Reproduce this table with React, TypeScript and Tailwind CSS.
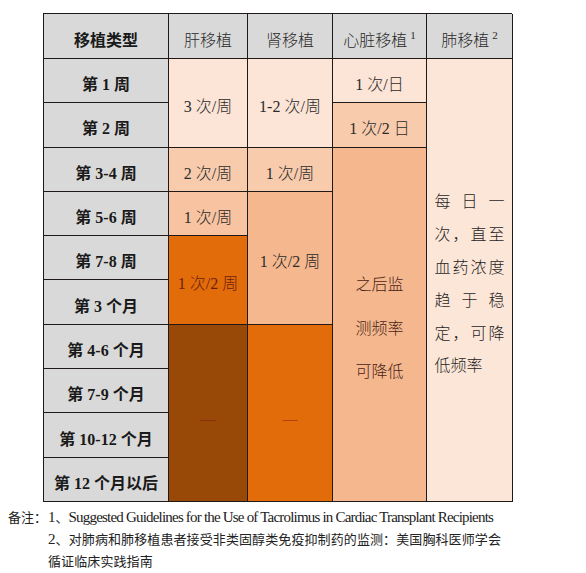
import React from "react";

const base =
  "flex items-center justify-center border-r border-b border-[#1f1a18] pt-[9px] text-[16px] leading-none";

function Cell({ className, children }: { className: string; children?: React.ReactNode }) {
  return <div className={`${base} ${className}`}>{children}</div>;
}

const labels = [
  "第 1 周",
  "第 2 周",
  "第 3-4 周",
  "第 5-6 周",
  "第 7-8 周",
  "第 3 个月",
  "第 4-6 个月",
  "第 7-9 个月",
  "第 10-12 个月",
  "第 12 个月以后",
];

const labelRows = [
  "row-start-2",
  "row-start-3",
  "row-start-4",
  "row-start-5",
  "row-start-6",
  "row-start-7",
  "row-start-8",
  "row-start-9",
  "row-start-10",
  "row-start-11",
];

const lungLines: { chars: string[]; justify: boolean }[] = [
  { chars: ["每", "日", "一"], justify: true },
  { chars: ["次", "，", "直", "至"], justify: true },
  { chars: ["血", "药", "浓", "度"], justify: true },
  { chars: ["趋", "于", "稳"], justify: true },
  { chars: ["定", "，", "可", "降"], justify: true },
  { chars: ["低", "频", "率"], justify: false },
];

export default function App() {
  return (
    <div className="w-[586px] h-[573px] bg-white font-['Liberation_Serif','Noto_Sans_CJK_SC',serif] text-[#2b2b2b]">
      <div className="pl-[43px] pt-[13px]">
        <div className="grid grid-cols-[125px_79px_85px_94px_86px] grid-rows-[45px_repeat(10,44.3px)] w-[469px] border-l border-t border-[#1f1a18]">
          {/* header */}
          <Cell className="col-start-1 row-start-1 bg-[#d9d9d9] font-bold text-[#1a1a1a]">移植类型</Cell>
          <Cell className="col-start-2 row-start-1 bg-[#d9d9d9] font-light">肝移植</Cell>
          <Cell className="col-start-3 row-start-1 bg-[#d9d9d9] font-light">肾移植</Cell>
          <Cell className="col-start-4 row-start-1 bg-[#d9d9d9] font-light">
            心脏移植<span className="text-[11px] relative -top-[5px] ml-[3px]">1</span>
          </Cell>
          <Cell className="col-start-5 row-start-1 bg-[#d9d9d9] font-light">
            肺移植<span className="text-[11px] relative -top-[5px] ml-[3px]">2</span>
          </Cell>

          {/* first column */}
          {labels.map((l, i) => (
            <Cell key={l} className={`col-start-1 ${labelRows[i]} bg-[#d9d9d9] font-bold text-[#1a1a1a] whitespace-pre`}>
              {l}
            </Cell>
          ))}

          {/* liver */}
          <Cell className="col-start-2 row-start-2 row-span-2 bg-[#fce4d6] font-light whitespace-pre">3 次/周</Cell>
          <Cell className="col-start-2 row-start-4 bg-[#f8cbad] font-light whitespace-pre">2 次/周</Cell>
          <Cell className="col-start-2 row-start-5 bg-[#f7c3a0] font-light whitespace-pre">1 次/周</Cell>
          <Cell className="col-start-2 row-start-6 row-span-2 bg-[#e36c0a] font-light text-[#6e1f0c] whitespace-pre">1 次/2 周</Cell>
          <Cell className="col-start-2 row-start-8 row-span-4 bg-[#984807] text-[#7a1a10]">
            <span className="text-[15px] relative top-[2px]">—</span>
          </Cell>

          {/* kidney */}
          <Cell className="col-start-3 row-start-2 row-span-2 bg-[#fce4d6] font-light whitespace-pre">1-2 次/周</Cell>
          <Cell className="col-start-3 row-start-4 bg-[#f8cbad] font-light whitespace-pre">1 次/周</Cell>
          <Cell className="col-start-3 row-start-5 row-span-3 bg-[#f5b88e] font-light whitespace-pre">1 次/2 周</Cell>
          <Cell className="col-start-3 row-start-8 row-span-4 bg-[#e36c0a] text-[#8a1a10]">
            <span className="text-[15px] relative top-[2px]">—</span>
          </Cell>

          {/* heart */}
          <Cell className="col-start-4 row-start-2 bg-[#fce4d6] font-light whitespace-pre">1 次/日</Cell>
          <Cell className="col-start-4 row-start-3 bg-[#f8cbad] font-light whitespace-pre">1 次/2 日</Cell>
          <Cell className="col-start-4 row-start-4 row-span-8 bg-[#f5b88e] font-light text-[#4a2418]">
            <div className="flex flex-col items-center">
              <div className="h-[43.5px] flex items-center">之后监</div>
              <div className="h-[43.5px] flex items-center">测频率</div>
              <div className="h-[43.5px] flex items-center">可降低</div>
            </div>
          </Cell>

          {/* lung */}
          <Cell className="col-start-5 row-start-2 row-span-10 bg-[#fce6d8] font-light text-[#1f1f1f]">
            <div className="flex flex-col w-[70px]">
              {lungLines.map((ln, i) => (
                <div
                  key={i}
                  className={`h-[32.8px] flex items-center ${ln.justify ? "justify-between" : "justify-start"}`}
                >
                  {ln.chars.map((c, j) => (
                    <span key={j}>{c}</span>
                  ))}
                </div>
              ))}
            </div>
          </Cell>
        </div>
      </div>

      {/* footnotes */}
      <div className="flex pl-[8px] pt-[4px] text-[13px] leading-[22px] text-[#222] font-['Noto_Sans_CJK_SC','Liberation_Serif',sans-serif]">
        <div className="w-[40px] shrink-0 whitespace-nowrap">备注：</div>
        <div className="flex flex-col">
          <div className="whitespace-nowrap">
            <span className="font-['Liberation_Serif',serif] text-[15px]">1</span>、
            <span className="font-['Liberation_Serif',serif] text-[15px] tracking-[-0.8px]">
              Suggested Guidelines for the Use of Tacrolimus in Cardiac Transplant Recipients
            </span>
          </div>
          <div className="whitespace-nowrap tracking-[0.1px]">
            <span className="font-['Liberation_Serif',serif] text-[15px]">2</span>、对肺病和肺移植患者接受非类固醇类免疫抑制药的监测：美国胸科医师学会
          </div>
          <div className="whitespace-nowrap tracking-[0.1px]">循证临床实践指南</div>
        </div>
      </div>
    </div>
  );
}
